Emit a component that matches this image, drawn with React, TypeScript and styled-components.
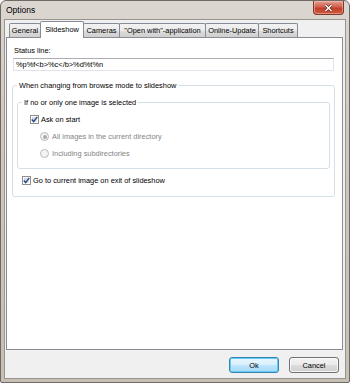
import React from 'react';
import styled, { createGlobalStyle } from 'styled-components';

const GlobalStyle = createGlobalStyle`
  html, body {
    margin: 0;
    padding: 0;
  }

  body {
    font-family: "Liberation Sans", Arial, sans-serif;
    font-size: 7.4px;
    color: #000;
  }
`;

const Window = styled.div`
  box-sizing: border-box;
  width: 350px;
  height: 383px;
  display: flex;
  flex-direction: column;
  padding: 0 3px 3px;
  border: 1px solid #6f6a65;
  border-radius: 6px 6px 2px 2px;
  background: linear-gradient(180deg, #dcd6d0 0%, #d0c8c0 35%, #c7beb4 100%);
`;

const TitleBar = styled.div`
  height: 18px;
  display: flex;
  justify-content: space-between;
  align-items: flex-start;
  padding-left: 2px;

  h1 {
    margin: 0;
    font-size: 8.5px;
    font-weight: 400;
    line-height: 18px;
  }
`;

const CloseButton = styled.div`
  box-sizing: border-box;
  width: 31px;
  height: 14px;
  margin-right: 2px;
  display: flex;
  align-items: center;
  justify-content: center;
  border: 1px solid #7c3a30;
  border-top: none;
  border-radius: 0 0 4px 4px;
  background: linear-gradient(180deg, #e4a193 0%, #d2604d 45%, #c2402c 55%, #cf5a3c 100%);
  box-shadow: inset 0 0 0 1px rgba(255, 210, 200, 0.45);

  svg {
    width: 9px;
    height: 8px;
  }
`;

const Client = styled.div`
  flex: 1;
  display: flex;
  flex-direction: column;
  background: #f0f0f0;
  border: 1px solid #9a948e;
`;

const TabRow = styled.div`
  height: 17px;
  display: flex;
  align-items: flex-end;
  padding-left: 4px;
`;

const Tab = styled.div<{ $active?: boolean; $w: number }>`
  box-sizing: border-box;
  width: ${p => p.$w}px;
  height: ${p => (p.$active ? 17 : 14)}px;
  margin: 0 -1px ${p => (p.$active ? -1 : 0)}px 0;
  display: flex;
  align-items: center;
  justify-content: center;
  white-space: nowrap;
  border: 1px solid #898c95;
  border-bottom: none;
  border-radius: 2px 2px 0 0;
  background: ${p =>
    p.$active
      ? '#fff'
      : 'linear-gradient(180deg, #f2f2f2 0%, #ebebeb 50%, #dddddd 50%, #cfcfcf 100%)'};
  position: relative;
  z-index: ${p => (p.$active ? 1 : 0)};
  padding-bottom: ${p => (p.$active ? 2 : 0)}px;
`;

const Panel = styled.div`
  box-sizing: border-box;
  height: 313px;
  margin: 0 2px 0 1px;
  padding: 8px 8px 0 6px;
  border: 1px solid #898c95;
  background: #fff;
`;

const Label = styled.div`
  line-height: 9px;
  margin: 0 0 3px 1px;
`;

const TextBox = styled.input`
  box-sizing: border-box;
  display: block;
  width: 100%;
  height: 13px;
  margin: 0;
  padding: 0 2px;
  font: inherit;
  font-size: 7.4px;
  color: #000;
  border: 1px solid #e2e3ea;
  border-top-color: #abadb3;
  outline: none;
  background: #fff;
`;

const Group = styled.fieldset<{ $inner?: boolean }>`
  margin: ${p => (p.$inner ? '8px 0 0' : '10px -1px 0')};
  padding: ${p => (p.$inner ? '4px 4px 6px' : '0 4px 7px')};
  border: 1px solid #d5dfe5;
  border-radius: 3px;
  min-width: 0;

  legend {
    padding: 0 2px;
    margin: 0;
    line-height: 9px;
  }
`;

const Row = styled.label<{ $indent: number; $disabled?: boolean; $gap?: number }>`
  height: 17px;
  display: flex;
  align-items: center;
  gap: ${p => p.$gap ?? 2}px;
  margin-left: ${p => p.$indent}px;
  color: ${p => (p.$disabled ? '#838383' : '#000')};
`;

const RowAfter = styled(Row)`
  margin-top: 3px;
`;

const CheckBox = styled.span`
  box-sizing: border-box;
  width: 9px;
  height: 9px;
  display: flex;
  align-items: center;
  justify-content: center;
  border: 1px solid #8e8f8f;
  background: linear-gradient(135deg, #c9ccd1 0%, #f4f4f5 100%);
  box-shadow: inset 0 0 0 1px #fff;

  svg {
    width: 7px;
    height: 7px;
  }
`;

const Radio = styled.span<{ $checked?: boolean }>`
  box-sizing: border-box;
  width: 9px;
  height: 9px;
  display: flex;
  align-items: center;
  justify-content: center;
  border: 1px solid #b9b9b9;
  border-radius: 50%;
  background: #f4f4f4;

  &::after {
    content: '';
    width: 4px;
    height: 4px;
    border-radius: 50%;
    background: ${p => (p.$checked ? '#a9a9a9' : 'transparent')};
  }
`;

const Footer = styled.div`
  flex: 1;
  display: flex;
  justify-content: flex-end;
  align-items: flex-start;
  gap: 10px;
  padding: 7px 6px 0 0;
`;

const Button = styled.button<{ $default?: boolean }>`
  box-sizing: border-box;
  width: 50px;
  height: 16px;
  padding: 0;
  font: inherit;
  font-size: 7.4px;
  color: #000;
  border-radius: 3px;
  border: 1px solid ${p => (p.$default ? '#3c7fb1' : '#707070')};
  background: ${p =>
    p.$default
      ? 'linear-gradient(180deg, #eaf6fd 0%, #d9f0fc 50%, #bee6fd 50%, #a7d9f5 100%)'
      : 'linear-gradient(180deg, #f2f2f2 0%, #ebebeb 50%, #dddddd 50%, #cfcfcf 100%)'};
  box-shadow: inset 0 0 0 1px ${p => (p.$default ? '#5fd0f5' : 'rgba(255,255,255,0.8)')};
`;

const tabs = [
  { name: 'General', w: 32 },
  { name: 'Slideshow', w: 44, active: true },
  { name: 'Cameras', w: 37 },
  { name: '"Open with"-application', w: 87 },
  { name: 'Online-Update', w: 54 },
  { name: 'Shortcuts', w: 40 },
];

function Check() {
  return (
    <svg viewBox="0 0 7 7">
      <path d="M0.8 3.6 L2.7 5.6 L6.3 0.9" fill="none" stroke="#2b4a8c" strokeWidth="1.5" />
    </svg>
  );
}

export default function App() {
  return (
    <>
      <GlobalStyle />
      <Window>
        <TitleBar>
          <h1>Options</h1>
          <CloseButton>
            <svg viewBox="0 0 9 8">
              <path d="M1.5 1 L7.5 7 M7.5 1 L1.5 7" stroke="#5a1d15" strokeWidth="2.6" />
              <path d="M1.5 1 L7.5 7 M7.5 1 L1.5 7" stroke="#fff" strokeWidth="1.5" />
            </svg>
          </CloseButton>
        </TitleBar>

        <Client>
          <TabRow>
            {tabs.map(t => (
              <Tab key={t.name} $w={t.w} $active={t.active}>
                {t.name}
              </Tab>
            ))}
          </TabRow>

          <Panel>
            <Label>Status line:</Label>
            <TextBox readOnly value="%p%f<b>%c</b>%d%t%n" />

            <Group>
              <legend>When changing from browse mode to slideshow</legend>

              <Group $inner>
                <legend>If no or only one image is selected</legend>
                <Row $indent={8}>
                  <CheckBox><Check /></CheckBox>
                  Ask on start
                </Row>
                <Row $indent={18} $gap={3} $disabled>
                  <Radio $checked />
                  All images in the current directory
                </Row>
                <Row $indent={18} $gap={3} $disabled>
                  <Radio />
                  Including subdirectories
                </Row>
              </Group>

              <RowAfter $indent={5}>
                <CheckBox><Check /></CheckBox>
                Go to current image on exit of slideshow
              </RowAfter>
            </Group>
          </Panel>

          <Footer>
            <Button $default>Ok</Button>
            <Button>Cancel</Button>
          </Footer>
        </Client>
      </Window>
    </>
  );
}
